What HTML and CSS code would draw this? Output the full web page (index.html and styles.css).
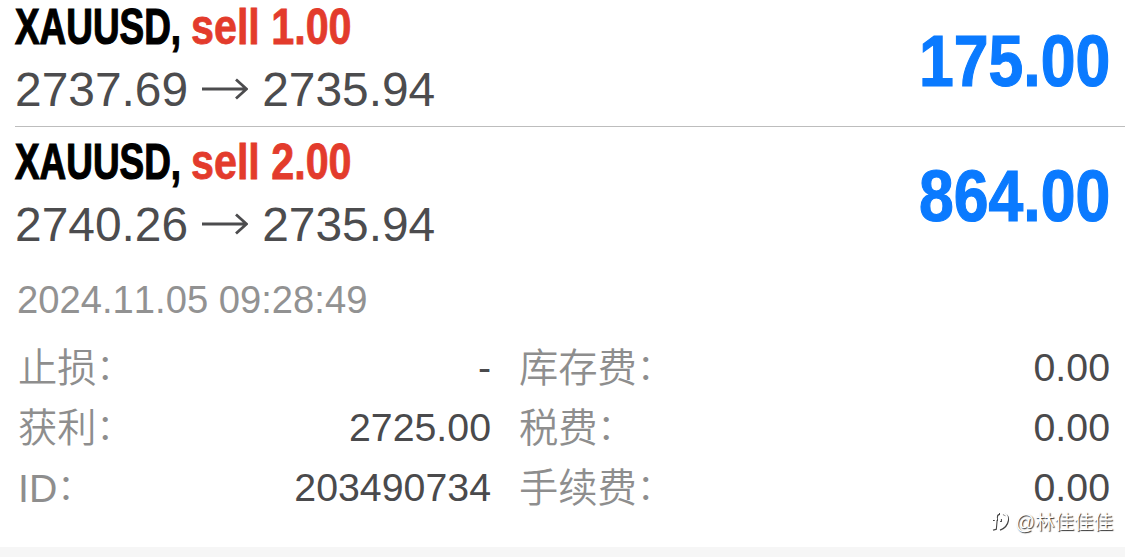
FILE: index.html
```
<!DOCTYPE html>
<html lang="zh-CN">
<head>
    <title>交易历史</title>
    <meta charset="UTF-8">
    <meta name="viewport" content="width=device-width, initial-scale=1">
    <link rel="stylesheet" href="styles.css">
</head>
<body>
    <div class="history">
        <div class="deal">
            <div class="deal-info">
                <div class="deal-title"><span class="symbol">XAUUSD,</span><span class="side">sell 1.00</span></div>
                <div class="deal-price">
                    <span>2737.69</span>
                    <svg class="arrow" width="46" height="24" viewBox="0 0 46 24"><path d="M0 11H44M34 1.500L44.500 11L34 20.500"/></svg>
                    <span>2735.94</span>
                </div>
            </div>
            <div class="profit">175.00</div>
        </div>

        <div class="deal deal-open">
            <div class="deal-info">
                <div class="deal-title"><span class="symbol">XAUUSD,</span><span class="side">sell 2.00</span></div>
                <div class="deal-price">
                    <span>2740.26</span>
                    <svg class="arrow" width="46" height="24" viewBox="0 0 46 24"><path d="M0 11H44M34 1.500L44.500 11L34 20.500"/></svg>
                    <span>2735.94</span>
                </div>
            </div>
            <div class="profit">864.00</div>
        </div>

        <div class="time">2024.11.05 09:28:49</div>

        <div class="details">
            <div class="row"><span class="label">止损<span class="colon" lang="zh-TW">：</span></span><span class="value">-</span></div>
            <div class="row"><span class="label">库存费<span class="colon" lang="zh-TW">：</span></span><span class="value">0.00</span></div>
            <div class="row"><span class="label">获利<span class="colon" lang="zh-TW">：</span></span><span class="value">2725.00</span></div>
            <div class="row"><span class="label">税费<span class="colon" lang="zh-TW">：</span></span><span class="value">0.00</span></div>
            <div class="row"><span class="label">ID<span class="colon" lang="zh-TW">：</span></span><span class="value">203490734</span></div>
            <div class="row"><span class="label">手续费<span class="colon" lang="zh-TW">：</span></span><span class="value">0.00</span></div>
        </div>
    </div>
    <div class="bottom-bar"></div>

    <div class="watermark">
        <svg width="18" height="20" viewBox="0 0 18 20">
            <g class="mark-shade"><path d="M8 2Q5 2 5 6L4 17L1 18M1 8H6M11 2Q17 3 16 9Q15 15 8 18M9 7V10"/></g>
            <g class="mark-light"><path d="M7 1Q4 1 4 5L3 16L0 17M0 7H5M10 1Q16 2 15 8Q14 14 7 17M8 6V9"/></g>
        </svg>
        <span>@林佳佳佳</span>
    </div>
</body>
</html>
```
FILE: styles.css
```
html, body {
    margin: 0;
    padding: 0;
    height: 100%;
    background: #ffffff;
}

body {
    display: flex;
    flex-direction: column;
    overflow: hidden;
    font-family: "Liberation Sans", "Noto Sans CJK SC", sans-serif;
    font-kerning: none;
}

.history {
    height: 547px;
    flex: none;
}

.deal {
    display: flex;
    justify-content: space-between;
    box-sizing: border-box;
    height: 127px;
    margin-left: 15px;
    padding-right: 15px;
    border-bottom: 1px solid #bdbdbd;
}

.deal-open {
    height: 135px;
    padding-top: 8px;
    border-bottom: none;
}

.deal-title {
    display: flex;
    height: 62px;
    line-height: 54px;
    font-size: 50px;
    font-weight: bold;
    white-space: nowrap;
}

/* condensed headings */
.symbol {
    width: 176px;
    transform: scaleX(0.738);
    transform-origin: left;
    color: #000000;
    -webkit-text-stroke: 1.2px #000000;
}

.side {
    transform: scaleX(0.825);
    transform-origin: left;
    color: #e33b2c;
    -webkit-text-stroke: 0.8px #e33b2c;
}

.deal-price {
    display: flex;
    align-items: center;
    height: 56px;
    line-height: 56px;
    font-size: 47.9px;
    color: #4c4c4e;
}

.arrow {
    margin: 0 14px;
    fill: none;
    stroke: #4c4c4e;
    stroke-width: 2.8;
}

.profit {
    height: 122px;
    line-height: 123px;
    font-size: 72px;
    font-weight: bold;
    color: #0a7aff;
    -webkit-text-stroke: 1.2px #0a7aff;
    transform: scaleX(0.868);
    transform-origin: right;
}

.time {
    height: 76px;
    line-height: 76px;
    padding-left: 17px;
    font-size: 38.2px;
    color: #929292;
}

.details {
    display: grid;
    grid-template-columns: 473px 591px;
    column-gap: 28px;
    grid-auto-rows: 60px;
    padding-left: 18px;
}

.row {
    display: flex;
    justify-content: space-between;
    line-height: 59px;
    font-size: 39.3px;
}

.label {
    padding-top: 1px;
    font-weight: 350;
    color: #8e8e8e;
}

/* half-width centred colon */
.colon {
    font-family: "Noto Sans CJK TC", sans-serif;
    font-size: 35px;
    font-feature-settings: "halt" 1;
    line-height: 1;
}

.value {
    color: #4a4a4c;
}

.bottom-bar {
    flex: 1;
    background: #f6f6f6;
}

.watermark {
    position: absolute;
    right: 12px;
    bottom: 22px;
    display: flex;
    align-items: center;
    gap: 5px;
    line-height: 26px;
    font-size: 19.5px;
    color: #ffffff;
    text-shadow: 1px 1px 1px #333333;
}

.mark-shade,
.mark-light {
    fill: none;
    stroke: #444444;
    stroke-width: 1.8;
}

.mark-light {
    stroke: #ffffff;
}
```
